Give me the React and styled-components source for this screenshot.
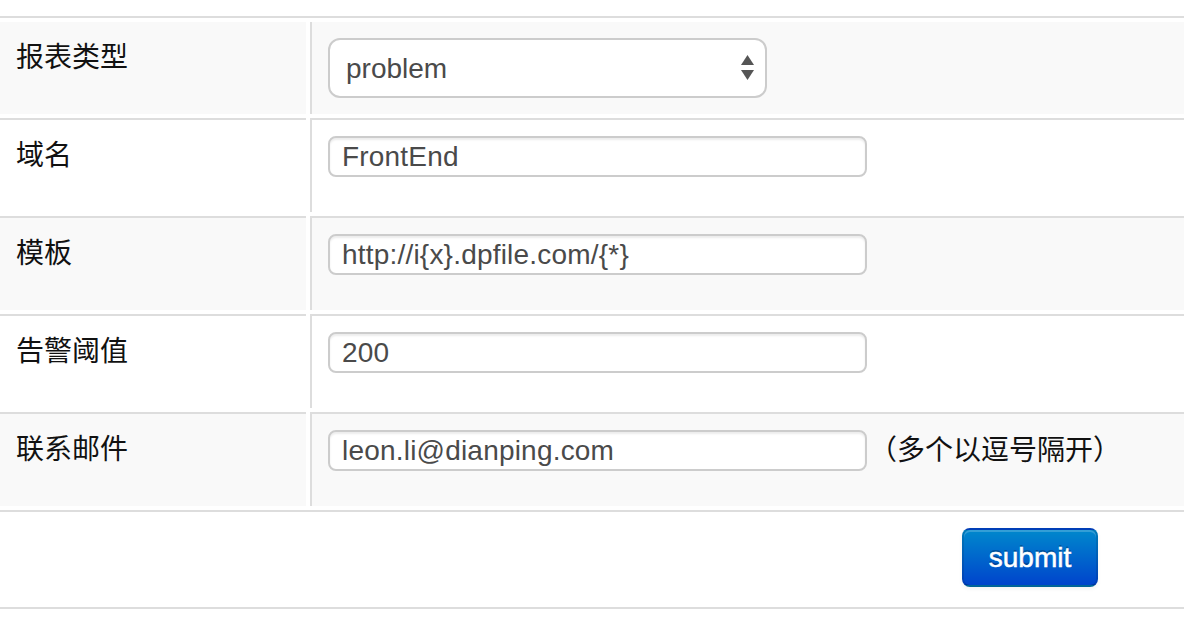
import React from 'react'
import styled, { createGlobalStyle } from 'styled-components'

const GlobalStyle = createGlobalStyle`
  html, body {
    margin: 0;
    padding: 0;
    background: #fff;
    overflow: hidden;
  }
  body {
    font-family: 'Liberation Sans', 'Noto Sans CJK SC', sans-serif;
    color: #111;
  }
`

const Page = styled.div`
  padding-top: 16px;
  width: 1184px;
`

const Form = styled.form`
  display: grid;
  grid-template-columns: 306px 1fr;
  gap: 4px;
  padding: 4px 0;
  border-top: 2px solid #ddd;
  border-bottom: 2px solid #ddd;
  margin: 0;
`

const Label = styled.div`
  padding: 16px;
  font-size: 28px;
  line-height: 40px;
  background: ${props => (props.striped ? '#f9f9f9' : '#fff')};
  border-top: ${props => (props.first ? 'none' : '2px solid #ddd')};
`

const Field = styled.div`
  padding: 16px;
  font-size: 28px;
  line-height: 40px;
  white-space: nowrap;
  background: ${props => (props.striped ? '#f9f9f9' : '#fff')};
  border-top: ${props => (props.first ? 'none' : '2px solid #ddd')};
  border-left: 2px solid #ddd;
`

const Actions = styled.div`
  grid-column: 1 / -1;
  border-top: 2px solid #ddd;
  padding: 16px 0 16px 962px;
  height: 59px;
`

const SelectWrap = styled.div`
  position: relative;
  display: inline-block;
  width: 439px;
  height: 60px;
  vertical-align: top;
`

const Select = styled.select`
  appearance: none;
  width: 100%;
  height: 100%;
  box-sizing: border-box;
  border: 2px solid #ccc;
  border-radius: 12px;
  background: #fff;
  padding: 0 16px;
  font-family: 'Liberation Sans', sans-serif;
  font-size: 28px;
  color: #4a4a4a;
  outline: none;
`

const Arrows = styled.svg`
  position: absolute;
  right: 12px;
  top: 17px;
  pointer-events: none;
`

const Input = styled.input`
  display: inline-block;
  box-sizing: border-box;
  width: 539px;
  height: 41px;
  margin: 0 0 19px;
  padding: 0 12px;
  border: 2px solid #ccc;
  border-radius: 8px;
  box-shadow: inset 0 2px 2px rgba(0, 0, 0, 0.075);
  background: #fff;
  font-family: 'Liberation Sans', sans-serif;
  font-size: 28px;
  letter-spacing: 0.2px;
  color: #4a4a4a;
  vertical-align: top;
  outline: none;
`

const Hint = styled.span`
  display: inline-block;
  margin-left: 2px;
  line-height: 41px;
  vertical-align: top;
`

const Button = styled.button`
  box-sizing: border-box;
  width: 136px;
  height: 59px;
  border: 2px solid #0044cc;
  border-color: rgba(0, 0, 0, 0.1) rgba(0, 0, 0, 0.1) rgba(0, 0, 0, 0.25);
  border-radius: 8px;
  background: linear-gradient(to bottom, #0088cc, #0044cc);
  color: #fff;
  font-family: 'Liberation Sans', sans-serif;
  font-size: 28px;
  -webkit-text-stroke: 0.5px #fff;
  text-shadow: 0 -2px 0 rgba(0, 0, 0, 0.25);
  box-shadow: inset 0 2px 0 rgba(255, 255, 255, 0.2), 0 2px 4px rgba(0, 0, 0, 0.05);
  cursor: pointer;
`

const rows = [
  { label: '域名', value: 'FrontEnd' },
  { label: '模板', value: 'http://i{x}.dpfile.com/{*}' },
  { label: '告警阈值', value: '200' },
  { label: '联系邮件', value: 'leon.li@dianping.com', hint: '（多个以逗号隔开）' }
]

export default function App () {
  return (
    <Page>
      <GlobalStyle />
      <Form onSubmit={e => e.preventDefault()}>
        <Label striped first>报表类型</Label>
        <Field striped first>
          <SelectWrap>
            <Select defaultValue='problem'>
              <option value='problem'>problem</option>
              <option value='transaction'>transaction</option>
              <option value='event'>event</option>
            </Select>
            <Arrows width='15' height='26' viewBox='0 0 15 26'>
              <path d='M7.5 0 L14 10 L1 10 Z' fill='#555' />
              <path d='M1 15 L14 15 L7.5 25 Z' fill='#555' />
            </Arrows>
          </SelectWrap>
        </Field>
        {rows.map((row, i) => (
          <React.Fragment key={row.label}>
            <Label striped={i % 2 === 1}>{row.label}</Label>
            <Field striped={i % 2 === 1}>
              <Input defaultValue={row.value} />
              {row.hint && <Hint>{row.hint}</Hint>}
            </Field>
          </React.Fragment>
        ))}
        <Actions>
          <Button type='submit'>submit</Button>
        </Actions>
      </Form>
    </Page>
  )
}
